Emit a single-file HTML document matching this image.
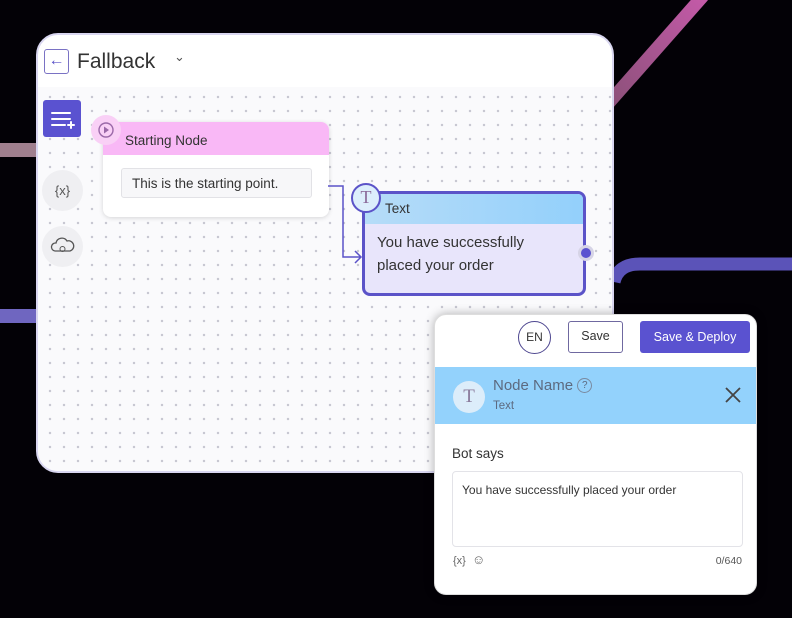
<!DOCTYPE html>
<html><head><meta charset="utf-8"><style>
*{box-sizing:border-box;margin:0;padding:0}
body{width:792px;height:618px;background:#030106;position:relative;overflow:hidden;font-family:"Liberation Sans",sans-serif;color:#333}
.abs{position:absolute}
#card{left:36px;top:33px;width:578px;height:440px;background:#fff;border-radius:22px;border:2px solid #d9d6f0;overflow:hidden}
#grid{left:0;top:52px;right:0;bottom:0;background-color:#fafafc;background-image:radial-gradient(circle,#c8c8d2 1.1px,transparent 1.4px);background-size:14px 14px;background-position:5px 3px}
#panel{left:434px;top:314px;width:323px;height:281px;background:#fff;border-radius:12px;border:1px solid #ddd;overflow:hidden;box-shadow:0 0 10px rgba(0,0,0,.3)}
</style></head><body>
<svg class="abs" style="left:0;top:0" width="792" height="618">
<defs><linearGradient id="pk" x1="0" y1="1" x2="1" y2="0"><stop offset="0" stop-color="#8a5078"/><stop offset="1" stop-color="#c45aa8"/></linearGradient></defs>
<line x1="606" y1="106" x2="703" y2="-4" stroke="url(#pk)" stroke-width="13"/>
<path d="M614 282 Q618 264 640 264 L792 264" fill="none" stroke="#5b53b8" stroke-width="13"/>
<rect x="0" y="143" width="40" height="14" fill="#a07f8e"/>
<rect x="0" y="309" width="40" height="14" fill="#6f66c0"/>
</svg>
<div id="card" class="abs">
 <div id="grid" class="abs"></div>
 <div class="abs" style="left:6px;top:14px;width:25px;height:25px;border:1.5px solid #7a72c4;border-radius:3px;color:#5b53c8;font-size:16px;text-align:center;line-height:22px">←</div>
 <div class="abs" style="left:39px;top:15px;font-size:21px;color:#333">Fallback</div>
 <div class="abs" style="left:136px;top:14px;font-size:13px;color:#555">⌄</div>
 <div class="abs" style="left:5px;top:65px;width:38px;height:37px;background:#5a52d0;border-radius:3px">
  <svg width="38" height="37"><g stroke="#fff" stroke-width="2" stroke-linecap="round"><line x1="9" y1="13" x2="27" y2="13"/><line x1="9" y1="19" x2="27" y2="19"/><line x1="9" y1="25" x2="22" y2="25"/><line x1="25" y1="25" x2="31" y2="25"/><line x1="28" y1="22" x2="28" y2="28"/></g></svg>
 </div>
 <div class="abs" style="left:4px;top:135px;width:41px;height:41px;border-radius:50%;background:#efeff2;text-align:center;line-height:41px;font-size:13px;color:#555">{x}</div>
 <div class="abs" style="left:4px;top:191px;width:41px;height:41px;border-radius:50%;background:#efeff2">
  <svg width="41" height="41"><path d="M13 25 a4 4 0 0 1 1-8 a6 6 0 0 1 11-2 a5 5 0 0 1 3 10 Z" fill="none" stroke="#555" stroke-width="1.3"/><circle cx="20.5" cy="23" r="2.5" fill="none" stroke="#555" stroke-width="1"/></svg>
 </div>
 <div class="abs" style="left:65px;top:87px;width:226px;height:95px;background:#fff;border-radius:8px;box-shadow:0 1px 5px rgba(0,0,0,.15);overflow:hidden">
  <div style="height:33px;background:#f9b8f6;padding:11px 0 0 22px;font-size:13.5px;color:#333">Starting Node</div>
  <div class="abs" style="left:18px;top:46px;width:191px;height:30px;background:#f7f7f9;border:1px solid #e2e2e6;border-radius:3px;font-size:13.5px;padding:7px 10px;color:#333">This is the starting point.</div>
 </div>
 <div class="abs" style="left:53px;top:80px;width:30px;height:30px;border-radius:50%;background:#f9d0f6">
  <svg width="30" height="30"><circle cx="15" cy="15" r="7" fill="none" stroke="#9a68a8" stroke-width="1.4"/><path d="M13 11.5 L18 15 L13 18.5Z" fill="#9a68a8"/></svg>
 </div>
 <svg class="abs" style="left:289px;top:144px" width="40" height="90"><path d="M1 7 H16 V78 H34 M28 72 L34 78 L28 84" fill="none" stroke="#5b53c8" stroke-width="1.5"/></svg>
 <div class="abs" style="left:324px;top:156px;width:224px;height:105px;border:3px solid #5b53c8;border-radius:8px;background:#e8e5fb;overflow:hidden">
  <div style="height:30px;background:linear-gradient(90deg,#b6dcf8,#93d0fb);padding:7px 0 0 20px;font-size:13.5px;color:#333">Text</div>
  <div style="padding:7px 0 0 12px;font-size:15px;line-height:23px;color:#333">You have successfully<br>placed your order</div>
 </div>
 <div class="abs" style="left:313px;top:148px;width:30px;height:30px;border-radius:50%;border:2px solid #5b53c8;background:#dceefc;text-align:center;line-height:25px;font-family:'Liberation Serif',serif;font-size:18px;color:#8a6a9a">T</div>
 <div class="abs" style="left:540px;top:210px;width:16px;height:16px;border-radius:50%;background:#5a52d0;border:3px solid #d6d4e6"></div>
</div>
<div id="panel" class="abs">
 <div class="abs" style="left:83px;top:6px;width:33px;height:33px;border:1.5px solid #4e4790;border-radius:50%;text-align:center;line-height:30px;font-size:12px;color:#333">EN</div>
 <div class="abs" style="left:133px;top:6px;width:55px;height:32px;border:1.5px solid #6f68a0;border-radius:3px;text-align:center;line-height:29px;font-size:12.5px;color:#333">Save</div>
 <div class="abs" style="left:205px;top:6px;width:110px;height:32px;background:#5a52d0;border-radius:3px;text-align:center;line-height:32px;font-size:12.5px;color:#fff">Save &amp; Deploy</div>
 <div class="abs" style="left:0;top:52px;width:323px;height:57px;background:#93d2fc">
  <div class="abs" style="left:18px;top:14px;width:32px;height:32px;border-radius:50%;background:#dcedfa;text-align:center;line-height:32px;font-family:'Liberation Serif',serif;font-size:19px;color:#8a7a9a">T</div>
  <div class="abs" style="left:58px;top:10px;font-size:15px;color:#5c6a80">Node Name <span style="display:inline-block;width:15px;height:15px;border:1px solid #7a8aa0;border-radius:50%;font-size:10px;text-align:center;line-height:13px;vertical-align:2px">?</span></div>
  <div class="abs" style="left:58px;top:33px;font-size:11.5px;color:#5c6a80">Text</div>
  <svg class="abs" style="left:289px;top:19px" width="18" height="18"><path d="M2 2L16 16M16 2L2 16" stroke="#444" stroke-width="1.8"/></svg>
 </div>
 <div class="abs" style="left:17px;top:131px;font-size:13.5px;color:#333">Bot says</div>
 <div class="abs" style="left:17px;top:156px;width:291px;height:76px;border:1px solid #e3e3e8;border-radius:4px;padding:11px 9px;font-size:12px;color:#333">You have successfully placed your order</div>
 <div class="abs" style="left:18px;top:237px;font-size:11px;color:#666">{x}&nbsp;&nbsp;<span style="font-size:13px">☺</span></div>
 <div class="abs" style="right:14px;top:240px;font-size:10.5px;color:#555">0/640</div>
</div>
</body></html>
